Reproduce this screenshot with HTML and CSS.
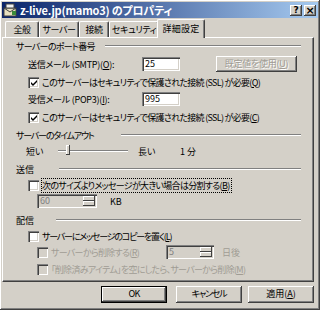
FILE: index.html
```html
<!DOCTYPE html>
<html lang="ja">
<head>
  <meta charset="UTF-8" />
  <title>z-live.jp(mamo3) のプロパティ</title>
  <link rel="stylesheet" href="styles.css">
</head>
<body>
  <div class="window">
    <div class="titlebar">
      <svg class="app-icon" width="14" height="14" viewBox="0 0 14 14">
        <rect x="1" y="5" width="12" height="8" fill="#e8e0c0" stroke="#404040" stroke-width="1"/>
        <path d="M1 5 L7 9 L13 5" fill="none" stroke="#404040" stroke-width="1"/>
        <rect x="3" y="1" width="8" height="4" fill="#f0f0f0" stroke="#404040" stroke-width="1"/>
        <rect x="9" y="8" width="4" height="4" fill="#3a8a3a"/>
      </svg>
      <span class="title">z-live.jp(mamo3) のプロパティ</span>
      <div class="caption-btns">
        <span class="cbtn">?</span>
        <span class="cbtn x">×</span>
      </div>
    </div>

    <div class="tabs">
      <span class="tab t-general">全般</span>
      <span class="tab t-server">サーバー</span>
      <span class="tab t-conn">接続</span>
      <span class="tab t-sec">セキュリティ</span>
      <span class="tab active">詳細設定</span>
    </div>

    <div class="panel">
      <div class="group-head gh-port"><span>サーバーのポート番号</span><i class="etch"></i></div>

      <div class="row port-row">
        <span class="port-label ls-loose">送信メール (SMTP)(<u>O</u>):</span>
        <span class="edit port-edit">25</span>
        <span class="btn disabled ls-loose">既定値を使用(<u>U</u>)</span>
      </div>
      <div class="row check-row">
        <span class="cb checked"><svg width="7" height="7" viewBox="0 0 7 7"><path d="M0 3 L2 5 L6 1 L6 3 L2 7 L0 5 Z" fill="#000"/></svg></span>
        <span>このサーバーはセキュリティで保護された接続 (SSL) が必要(<u>Q</u>)</span>
      </div>

      <div class="row port-row pop">
        <span class="port-label ls-loose">受信メール (POP3)(<u>I</u>):</span>
        <span class="edit port-edit">995</span>
      </div>
      <div class="row check-row">
        <span class="cb checked"><svg width="7" height="7" viewBox="0 0 7 7"><path d="M0 3 L2 5 L6 1 L6 3 L2 7 L0 5 Z" fill="#000"/></svg></span>
        <span>このサーバーはセキュリティで保護された接続 (SSL) が必要(<u>C</u>)</span>
      </div>

      <div class="group-head gh-timeout"><span class="ls-tight">サーバーのタイムアウト</span><i class="etch"></i></div>
      <div class="row slider-row">
        <span class="short ls-none">短い</span>
        <span class="slider"><i class="track"></i><i class="thumb"></i></span>
        <span class="long ls-none">長い</span>
        <span class="minutes ls-none">1 分</span>
      </div>

      <div class="group-head gh-send"><span class="ls-none">送信</span><i class="etch"></i></div>
      <div class="row check-row">
        <span class="cb"></span>
        <span class="focus">次のサイズよりメッセージが大きい場合は分割する(<u>B</u>)</span>
      </div>
      <div class="row spin-row">
        <span class="edit spin size-spin"><span class="val">60</span><span class="spinner"><i></i><i></i></span></span>
        <span class="unit ls-none">KB</span>
      </div>

      <div class="group-head gh-deliver"><span class="ls-none">配信</span><i class="etch"></i></div>
      <div class="row check-row">
        <span class="cb"></span>
        <span class="ls-tight">サーバーにメッセージのコピーを置く(<u>L</u>)</span>
      </div>
      <div class="row check-row sub dim">
        <span class="cb"></span>
        <span class="del-label">サーバーから削除する(<u>R</u>)</span>
        <span class="edit spin days-spin"><span class="val">5</span><span class="spinner"><i></i><i></i></span></span>
        <span class="days ls-none">日後</span>
      </div>
      <div class="row check-row sub dim last">
        <span class="cb"></span>
        <span>「削除済みアイテム」を空にしたら、サーバーから削除(<u>M</u>)</span>
      </div>
    </div>

    <div class="footer">
      <span class="btn default">OK</span>
      <span class="btn ls-tight">キャンセル</span>
      <span class="btn ls-none">適用(<u>A</u>)</span>
    </div>
  </div>
</body>
</html>
```

FILE: styles.css
```css
body {
  margin: 0;
  background: #d4d0c8;
  font-family: "Noto Sans CJK JP", "Noto Sans", sans-serif;
  font-size: 9px;
  font-feature-settings: "palt";
  letter-spacing: -0.7px;
  white-space: nowrap;
  color: #000;
}
u {
  text-decoration: underline;
}
.ls-tight { letter-spacing: -1.2px; }
.ls-loose { letter-spacing: -0.25px; }
.ls-none { letter-spacing: 0; }

.window {
  width: 320px;
  height: 310px;
  box-sizing: border-box;
  padding: 2px;
  background: #d4d0c8;
  box-shadow: inset -1px -1px #404040, inset 1px 1px #fff, inset -2px -2px #808080;
  overflow: hidden;
}
.titlebar {
  height: 16px;
  display: flex;
  align-items: center;
  background: linear-gradient(to right, #0a246a, #a6caf0);
  padding-left: 1px;
  padding-right: 2px;
}
.app-icon {
  flex: none;
}
.title {
  margin-left: 3px;
  color: #fff;
  font-weight: bold;
  font-size: 11px;
  letter-spacing: -0.2px;
}
.caption-btns {
  margin-left: auto;
  display: flex;
}
.cbtn {
  width: 12px;
  height: 11px;
  background: #d4d0c8;
  box-shadow: inset -1px -1px #404040, inset 1px 1px #fff, inset -2px -2px #808080;
  font-family: "DejaVu Sans", sans-serif;
  font-weight: bold;
  font-size: 9px;
  line-height: 11px;
  text-align: center;
  letter-spacing: 0;
}
.cbtn.x {
  margin-left: 2px;
  font-size: 11px;
}

/* tab strip */
.tabs {
  display: flex;
  align-items: flex-end;
  height: 19px;
  padding-left: 3px;
  letter-spacing: -0.4px;
}
.tab {
  height: 16px;
  box-sizing: border-box;
  line-height: 15px;
  text-align: center;
  border-top: 1px solid #fff;
  border-left: 1px solid #fff;
  border-right: 1px solid #404040;
  border-radius: 2px 2px 0 0;
  box-shadow: inset -1px 0 #808080;
}
.t-general { width: 34px; }
.t-server { width: 40px; }
.t-conn { width: 30px; }
.t-sec { width: 50px; }
.tab.active {
  width: 48px;
  height: 19px;
  line-height: 17px;
  margin: 0 0 -1px -2px;
  background: #d4d0c8;
  letter-spacing: 0.2px;
  position: relative;
  z-index: 1;
}

.panel {
  height: 245px;
  box-sizing: border-box;
  margin: 0 4px 0 0;
  padding: 2px 0 0 13px;
  border-top: 1px solid #fff;
  border-left: 1px solid #fff;
  border-right: 1px solid #404040;
  border-bottom: 1px solid #404040;
  box-shadow: inset -1px -1px #808080;
}
.group-head {
  display: flex;
  align-items: center;
  height: 12px;
  margin-right: 12px;
}
.group-head span {
  flex: none;
}
.etch {
  flex: 1;
  height: 0;
  border-top: 1px solid #808080;
  border-bottom: 1px solid #fff;
}
.gh-port span { width: 89px; }
.gh-timeout { margin-top: 6px; }
.gh-timeout span { width: 105px; }
.gh-send { margin-top: 5px; }
.gh-send span { width: 43px; }
.gh-deliver { margin-top: 6px; }
.gh-deliver span { width: 40px; }

.row {
  display: flex;
  align-items: center;
  padding-left: 12px;
}
.port-row {
  height: 16px;
  margin-top: 4px;
}
.port-row.pop {
  margin-top: 3px;
}
.port-label {
  width: 114px;
}
.edit {
  height: 14px;
  box-sizing: border-box;
  background: #fff;
  box-shadow: inset 1px 1px #808080, inset 2px 2px #404040, inset -1px -1px #fff, inset -2px -2px #d4d0c8;
  padding: 0 3px;
  line-height: 14px;
  letter-spacing: 0;
}
.port-edit {
  width: 38px;
}
.btn {
  display: inline-block;
  height: 16px;
  line-height: 16px;
  box-sizing: border-box;
  text-align: center;
  background: #d4d0c8;
  box-shadow: inset -1px -1px #404040, inset 1px 1px #fff, inset -2px -2px #808080;
}
.port-row .btn {
  width: 81px;
  margin-left: 36px;
}
.btn.disabled {
  color: #a09c94;
  text-shadow: 1px 1px #fff;
}
.check-row {
  height: 12px;
  margin-top: 4px;
}
.cb {
  flex: none;
  width: 11px;
  height: 11px;
  box-sizing: border-box;
  margin-right: 3px;
  background: #fff;
  box-shadow: inset 1px 1px #808080, inset 2px 2px #404040, inset -1px -1px #fff, inset -2px -2px #d4d0c8;
  display: flex;
  align-items: center;
  justify-content: center;
}
.cb svg {
  margin: 1px 0 0 1px;
}
.focus {
  outline: 1px dotted #000;
  outline-offset: 0;
  padding-right: 1px;
}

/* timeout slider */
.slider-row {
  height: 14px;
  margin-top: 3px;
  padding-left: 10px;
}
.short {
  width: 32px;
}
.slider {
  position: relative;
  width: 70px;
  height: 14px;
}
.track {
  position: absolute;
  left: 0;
  right: 0;
  top: 6px;
  height: 2px;
  box-sizing: border-box;
  border-top: 1px solid #808080;
  border-bottom: 1px solid #fff;
}
.thumb {
  position: absolute;
  left: 8px;
  top: 1px;
  width: 4px;
  height: 10px;
  background: #d4d0c8;
  box-shadow: inset -1px -1px #404040, inset 1px 1px #fff;
}
.long {
  margin-left: 10px;
  width: 42px;
}

.check-row.sub {
  padding-left: 21px;
}
.spin-row {
  height: 14px;
  margin-top: 3px;
  padding-left: 21px;
}
.spin {
  display: flex;
  align-items: center;
  padding: 0 2px 0 3px;
  background: #d4d0c8;
}
.spin .val {
  flex: 1;
  color: #808080;
}
.spinner {
  display: flex;
  flex-direction: column;
  width: 12px;
  height: 10px;
}
.spinner i {
  flex: 1;
  background: #d4d0c8;
  box-shadow: inset -1px -1px #404040, inset 1px 1px #fff;
}
.size-spin {
  width: 60px;
}
.unit {
  margin-left: 13px;
}
.dim {
  color: #a09c94;
}
.dim .cb {
  background: #d4d0c8;
}
.del-label {
  width: 115px;
}
.days-spin {
  width: 48px;
}
.days {
  margin-left: 8px;
}
.check-row.last {
  margin-top: 5px;
}

.footer {
  display: flex;
  justify-content: flex-end;
  gap: 6px;
  margin-top: 4px;
  padding-right: 4px;
}
.footer .btn {
  width: 66px;
  height: 17px;
}
.footer .btn.default {
  margin-right: 3px;
  box-shadow: inset 0 0 0 1px #000, inset -2px -2px #404040, inset 2px 2px #fff, inset -3px -3px #808080;
}
```
